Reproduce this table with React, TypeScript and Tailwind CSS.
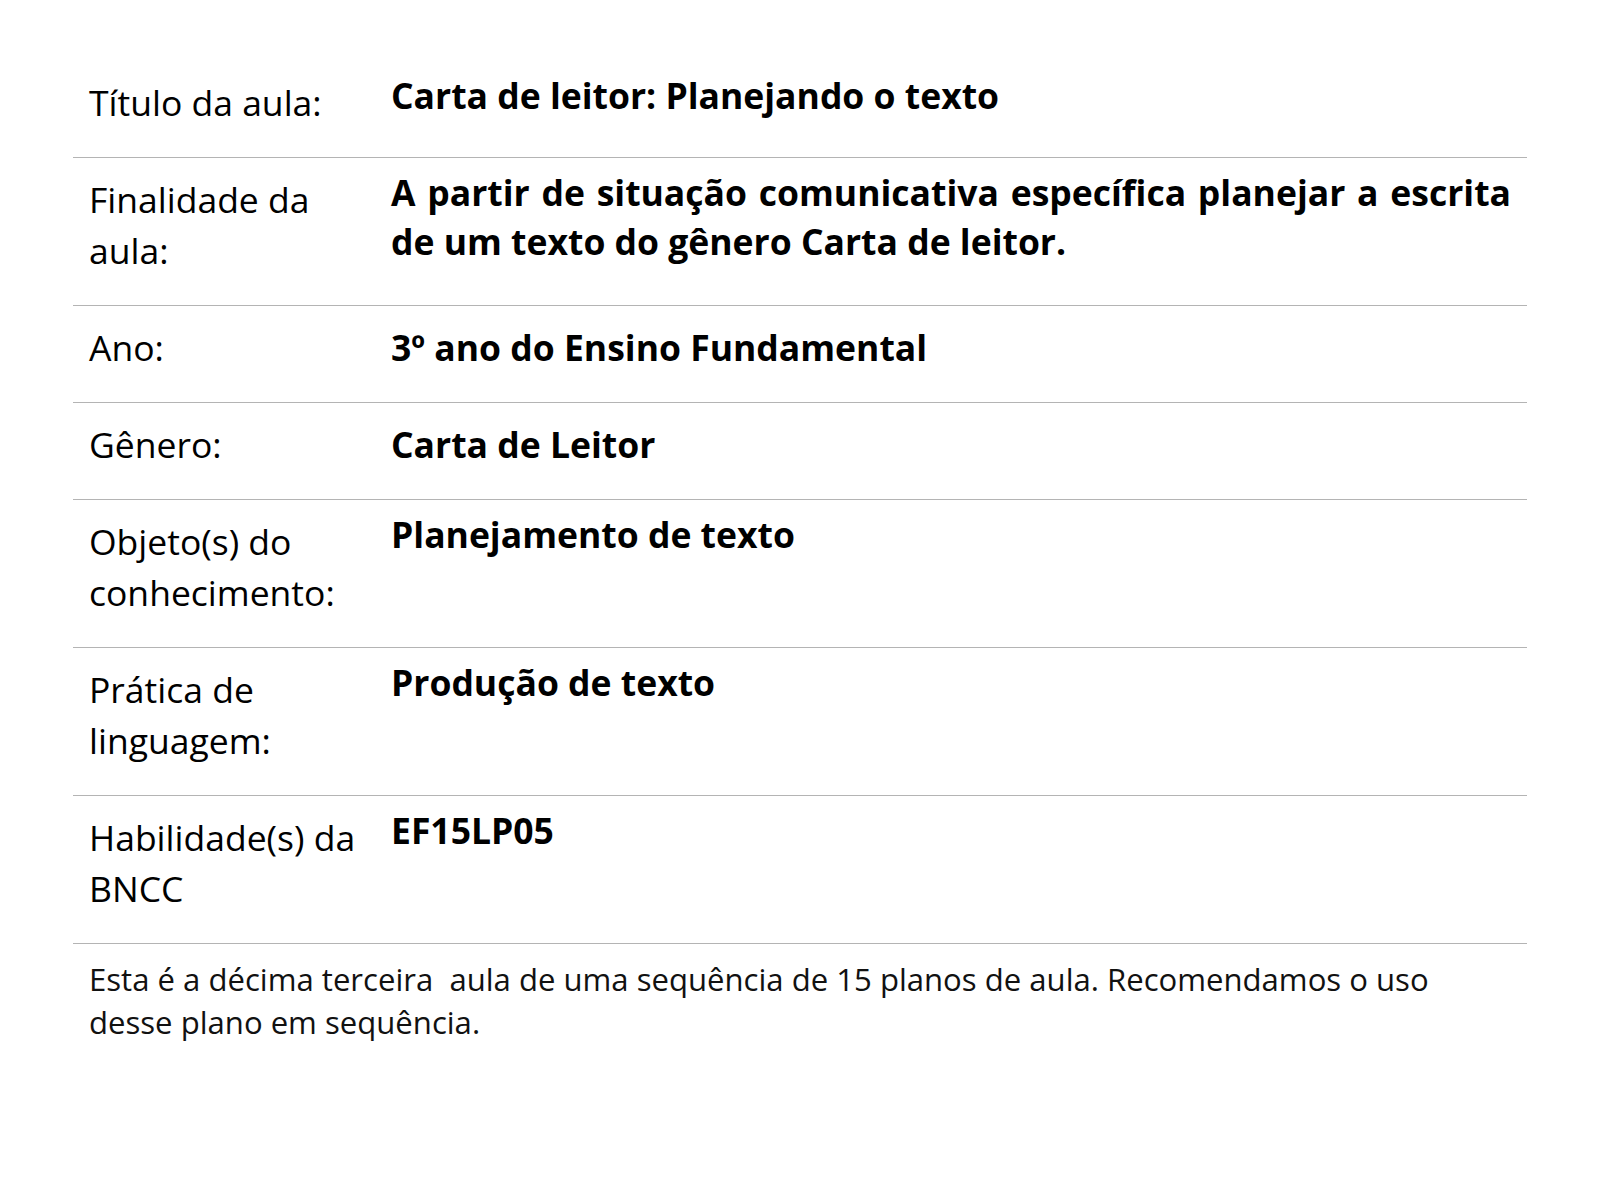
const rows = [
  { label: "Título da aula:", value: "Carta de leitor: Planejando o texto" },
  {
    label: "Finalidade da aula:",
    value: "A partir de situação comunicativa específica planejar a escrita de um texto do gênero Carta de leitor.",
  },
  { label: "Ano:", value: "3º ano do Ensino Fundamental", center: true },
  { label: "Gênero:", value: "Carta de Leitor", center: true },
  { label: "Objeto(s) do conhecimento:", value: "Planejamento de texto" },
  { label: "Prática de linguagem:", value: "Produção de texto" },
  { label: "Habilidade(s) da BNCC", value: "EF15LP05" },
];

export default function App() {
  return (
    <div className="min-h-[1200px] bg-white px-[73px] pt-[61px] font-['Open_Sans',sans-serif] text-black">
      <div className="w-full">
        {rows.map((row) => (
          <div key={row.label} className="flex border-b border-[#b4b4b4]">
            <div className="w-[302px] shrink-0 pl-4 pr-2 pt-[16px] pb-[29px] text-[35.5px] leading-[51px]">
              {row.label}
            </div>
            <div
              className={`flex-1 px-4 text-justify text-[35.5px] font-bold leading-[49px] ${
                row.center ? "pt-[17px]" : "pt-[10px]"
              }`}
            >
              {row.value}
            </div>
          </div>
        ))}
        <p className="pl-4 pr-4 pt-[14px] text-[31.1px] leading-[43px] text-[#111]">
          Esta é a décima terceira&nbsp; aula de uma sequência de 15 planos de aula. Recomendamos o uso desse plano em
          sequência.
        </p>
      </div>
    </div>
  );
}
